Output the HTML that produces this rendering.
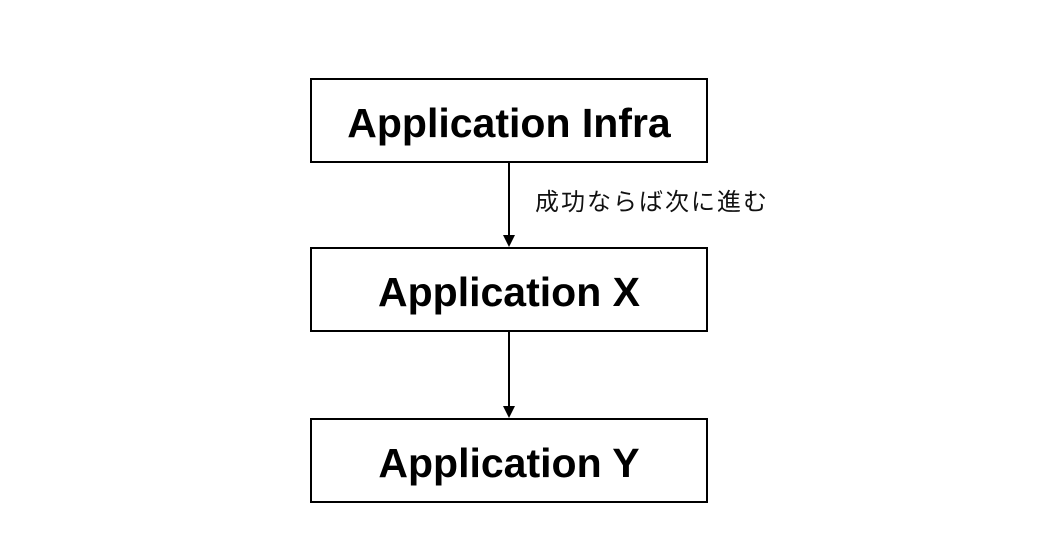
<!DOCTYPE html>
<html><head><meta charset="utf-8"><style>
body{margin:0;width:1039px;height:537px;background:#fff;position:relative;overflow:hidden;font-family:"Liberation Sans",sans-serif}
.b{position:absolute;left:310px;width:394px;border:2px solid #000;display:flex;align-items:center;justify-content:center;font-weight:bold;font-size:41px;color:#000;padding-top:5px;box-sizing:content-box;height:76px}
.l{position:absolute;left:508px;width:2px;background:#000}
.a{position:absolute;left:503px;width:0;height:0;border-left:6.5px solid transparent;border-right:6.5px solid transparent;border-top:12px solid #000}
.t{position:absolute;left:535px;top:182px;font-size:24px;letter-spacing:2px;font-family:"Liberation Sans","Noto Sans CJK JP",sans-serif;color:#111}
</style></head><body>
<div class="b" style="top:78px">Application Infra</div>
<div class="l" style="top:163px;height:74px"></div>
<div class="a" style="top:235px"></div>
<div class="t">成功ならば次に進む</div>
<div class="b" style="top:247px">Application X</div>
<div class="l" style="top:332px;height:76px"></div>
<div class="a" style="top:406px"></div>
<div class="b" style="top:418px">Application Y</div>
</body></html>
